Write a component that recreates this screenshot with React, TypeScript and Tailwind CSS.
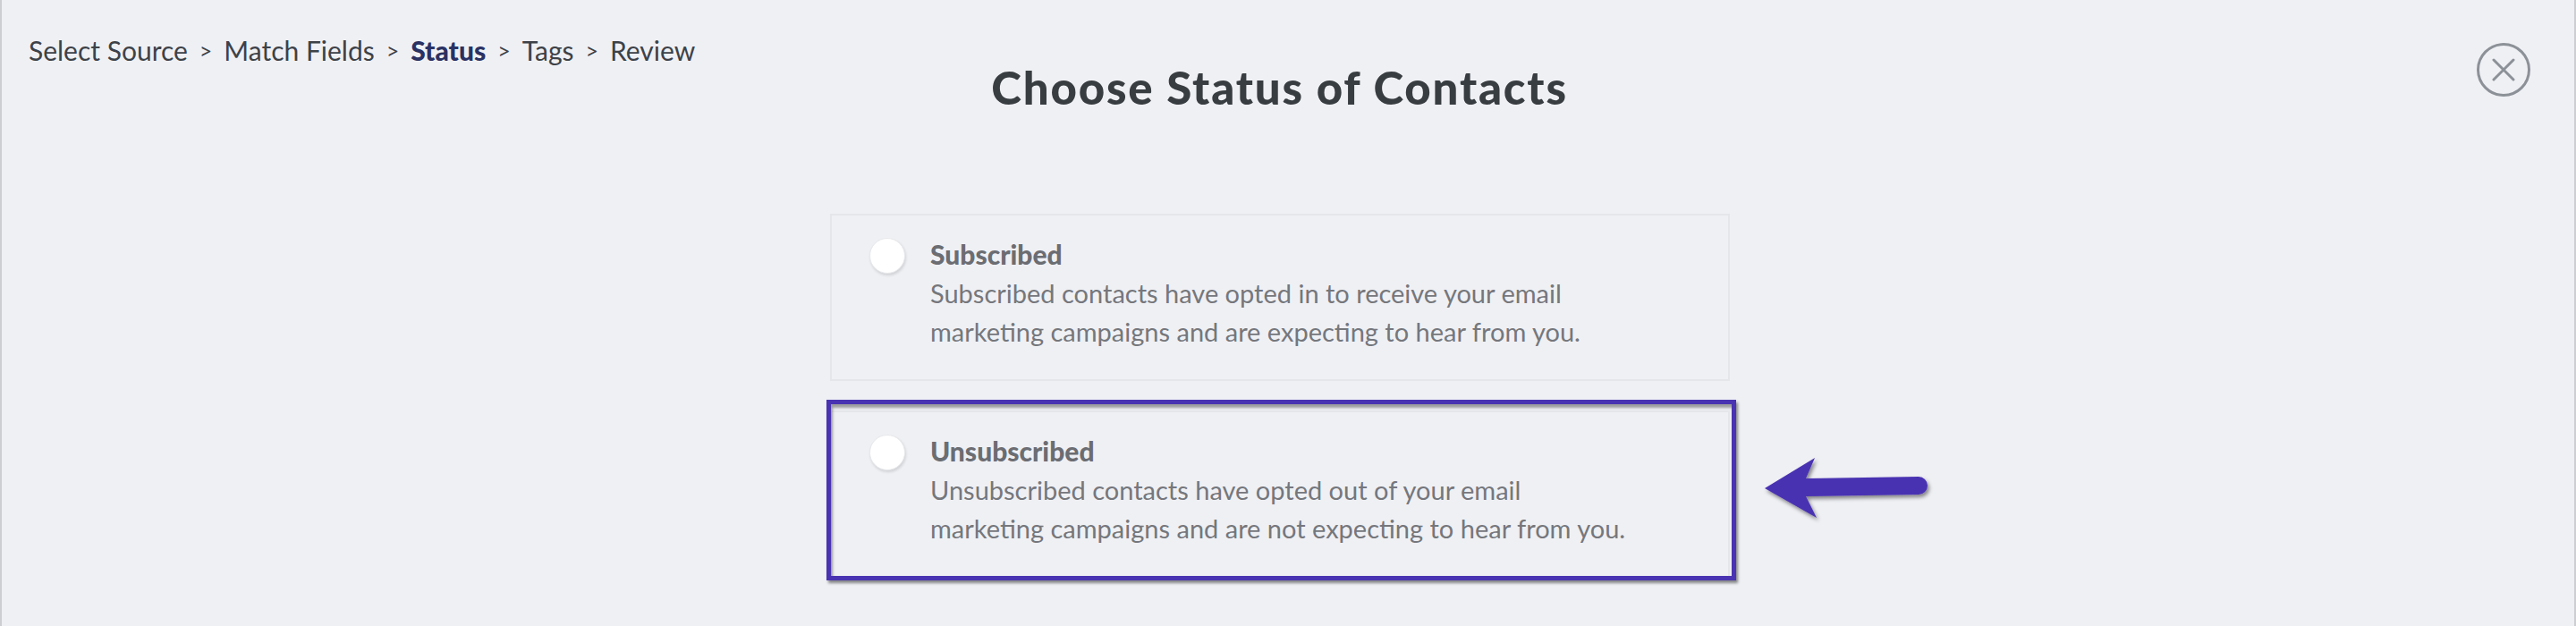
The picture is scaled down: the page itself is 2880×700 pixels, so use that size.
import React from 'react';

const steps = ['Select Source', 'Match Fields', 'Status', 'Tags', 'Review'];

const options = [
  {
    id: 'subscribed',
    title: 'Subscribed',
    lines: ['Subscribed contacts have opted in to receive your email', 'marketing campaigns and are expecting to hear from you.'],
  },
  {
    id: 'unsubscribed',
    title: 'Unsubscribed',
    lines: ['Unsubscribed contacts have opted out of your email', 'marketing campaigns and are not expecting to hear from you.'],
    highlighted: true,
  },
];

const App: React.FC = () => {
  return (
    <div className="w-full h-[700px] bg-[#eff0f4] border-l-2 border-r-2 border-[#cdced2] flex flex-col font-['Lato','Liberation_Sans',sans-serif] overflow-hidden">
      {/* Header */}
      <div className="flex items-start">
        <div className="flex-1 basis-0 pt-[36px] pl-[30px] text-[30px] leading-[40px] text-[#3d4248] whitespace-nowrap flex">
          {steps.map((s, i) => (
            <span key={s} className="flex">
              {i > 0 && <span className="mx-[13px] text-[25px]">&gt;</span>}
              <span className={s === 'Status' ? 'font-black text-[#2a3163]' : ''}>{s}</span>
            </span>
          ))}
        </div>
        <h1 className="mt-[72px] text-[51px] leading-[51px] font-black tracking-[1.8px] text-[#383d41] whitespace-nowrap">
          Choose Status of Contacts
        </h1>
        <div className="flex-1 basis-0 flex justify-end pr-[49px] pt-[48px]">
          <button className="w-[60px] h-[60px] rounded-full border-[3px] border-[#8c9198] flex items-center justify-center">
            <svg width="26" height="26" viewBox="0 0 26 26" fill="none" stroke="#8c9198" strokeWidth="3" strokeLinecap="round">
              <path d="M2 2 L24 24 M24 2 L2 24" />
            </svg>
          </button>
        </div>
      </div>

      {/* Options */}
      <div className="mt-[116px] flex justify-center pr-[18px]">
        <div className="flex flex-col gap-[33px]">
          {options.map(o => (
            <div key={o.id} className="relative w-[1006px] border-2 border-[#e5e6ea] pl-[42px] pt-[22px] pb-[32px] flex items-start gap-[28px]">
              <div className="mt-[3px] w-[40px] h-[40px] rounded-full bg-white border border-[#e8e9ec] shadow-[1px_2px_3px_rgba(0,0,0,0.12)] shrink-0"></div>
              <div className="text-[29px] leading-[43px]">
                <div className="font-black text-[30px] text-[#6b6d72]">{o.title}</div>
                {o.lines.map((l, i) => (
                  <div key={i} className="text-[#75777c] whitespace-nowrap">{l}</div>
                ))}
              </div>
              {o.highlighted && (
                <>
                  <div className="absolute left-[-6px] top-[-14px] right-[-9px] bottom-[-5px] border-[5px] border-[#4a33b2] shadow-[2px_3px_3px_rgba(0,0,0,0.45),inset_2px_4px_3px_rgba(0,0,0,0.35)] pointer-events-none"></div>
                  <svg className="absolute left-[1032px] top-[39px]" width="200" height="90" viewBox="0 0 200 90">
                    <defs>
                      <filter id="arrowShadow" x="-20%" y="-20%" width="140%" height="160%">
                        <feDropShadow dx="2" dy="3" stdDeviation="2" floodColor="#000" floodOpacity="0.45" />
                      </filter>
                    </defs>
                    <path
                      d="M11 46 L67 12 L57 35 L183 33 A10 10 0 0 1 183 53 L57 55 L69 79 Z"
                      fill="#4a33b2"
                      filter="url(#arrowShadow)"
                    />
                  </svg>
                </>
              )}
            </div>
          ))}
        </div>
      </div>
    </div>
  );
};

export default App;
